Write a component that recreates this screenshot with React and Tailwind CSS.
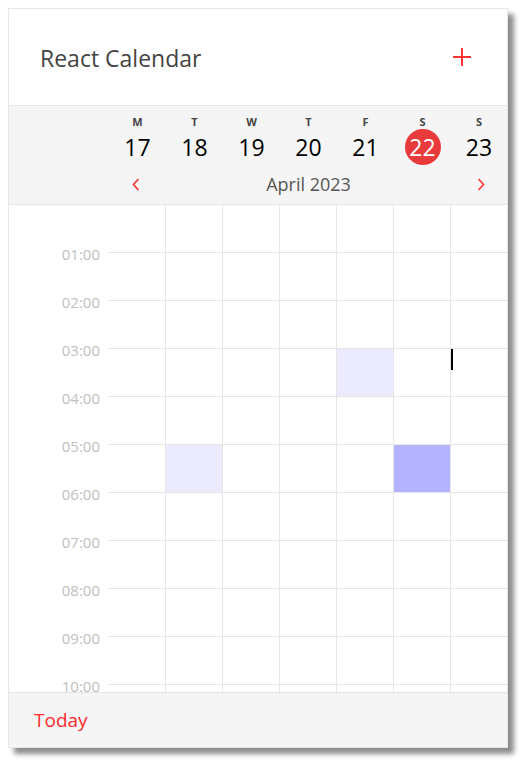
import React from "react";

const days = [
  { letter: "M", num: 17 },
  { letter: "T", num: 18 },
  { letter: "W", num: 19 },
  { letter: "T", num: 20 },
  { letter: "F", num: 21 },
  { letter: "S", num: 22, today: true },
  { letter: "S", num: 23 },
];

// events keyed by "row-col"
const events = {
  "3-4": "bg-[#ebebfd]",
  "5-1": "bg-[#ebebfd]",
  "5-5": "bg-[#b3b3ff]",
};

const hours = Array.from({ length: 24 }, (_, i) => i);
const cols = "grid grid-cols-[57px_57px_57px_57px_57px_57px_56px]";

const Chevron = ({ dir }) => (
  <svg width="8" height="13" viewBox="0 0 8 13" fill="none">
    <path
      d={dir === "left" ? "M6.5 1L1.5 6.5L6.5 12" : "M1.5 1L6.5 6.5L1.5 12"}
      stroke="#ff3333"
      strokeWidth="1.6"
    />
  </svg>
);

export default function App() {
  return (
    <div className="min-h-screen bg-white p-2 font-['Open_Sans',sans-serif]">
      <div className="w-[500px] h-[740px] border border-[#e6e6e6] bg-white flex flex-col shadow-[6px_6px_5px_rgba(0,0,0,0.45)]">
        {/* Header */}
        <div className="h-[97px] shrink-0 border-b border-[#e6e6e6] flex items-center justify-between pl-[31px] pr-[36px]">
          <h1 className="text-[23px] text-[#444] leading-none mt-[3px]">React Calendar</h1>
          <svg width="18" height="18" viewBox="0 0 18 18">
            <path d="M9 0V18M0 9H18" stroke="#ff3333" strokeWidth="2" />
          </svg>
        </div>

        {/* Week header */}
        <div className="h-[99px] shrink-0 bg-[#f5f5f5] border-b border-[#e6e6e6] pl-[100px] pt-[9px]">
          <div className={cols}>
            {days.map((d, i) => (
              <div key={i} className="flex flex-col items-center">
                <span className="text-[11px] leading-[14px] font-bold text-[#444]">{d.letter}</span>
                <div
                  className={`w-9 h-9 rounded-full flex items-center justify-center text-[23px] leading-none ${
                    d.today ? "bg-[#e93b3b] text-white" : "text-black"
                  }`}
                >
                  {d.num}
                </div>
              </div>
            ))}
          </div>
          <div className="mt-[7px] h-[24px] flex items-center justify-between pl-[23px] pr-[22px]">
            <Chevron dir="left" />
            <span className="text-[18px] text-[#555] leading-none">April 2023</span>
            <Chevron dir="right" />
          </div>
        </div>

        {/* Grid (scrolls in the real app) */}
        <div className="flex-1 overflow-hidden flex">
          <div className="w-[100px] shrink-0 pt-[25px] pr-[9px]">
            {hours.slice(1).map((h) => (
              <div key={h} className="h-[48px] flex items-center justify-end text-[15px] text-[#c0c0c0]">
                {String(h).padStart(2, "0")}:00
              </div>
            ))}
          </div>
          <div className="flex-1">
            {hours.map((r) => (
              <div key={r} className={cols}>
                {days.map((_, c) => (
                  <div
                    key={c}
                    className={`relative h-[48px] border-b border-[#e6e6e6] ${c < 6 ? "border-r" : ""} ${
                      events[`${r}-${c}`] || ""
                    }`}
                  >
                    {r === 3 && c === 6 && (
                      <div className="absolute left-0 top-0 w-[2px] h-[21px] bg-black" />
                    )}
                  </div>
                ))}
              </div>
            ))}
          </div>
        </div>

        {/* Footer */}
        <div className="h-[55px] shrink-0 bg-[#f5f5f5] border-t border-[#e6e6e6] flex items-center pl-[25px]">
          <button className="text-[19px] text-[#ff2a2a] leading-none">Today</button>
        </div>
      </div>
    </div>
  );
}
